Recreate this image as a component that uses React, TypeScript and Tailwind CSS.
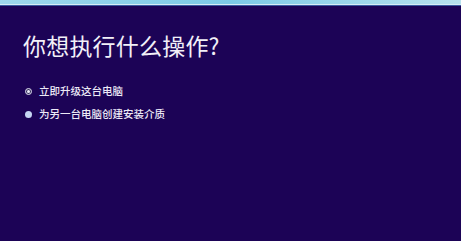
const options = [
  { label: "立即升级这台电脑", selected: true },
  { label: "为另一台电脑创建安装介质", selected: false },
];

export default function App() {
  return (
    <div
      className="w-[461px] h-[241px] flex flex-col bg-[#1c0356] text-white overflow-hidden"
      style={{ fontFamily: '"Noto Sans CJK SC", "Noto Sans", sans-serif' }}
    >
      {/* Window frame edge */}
      <div className="h-[4px] bg-gradient-to-r from-[#9fd8ec] via-[#7ccbe6] to-[#b8e2ee]" />
      <div className="h-[1px] bg-[#d7eef6]" />
      <div className="h-[1px] bg-[#3a5aa0]" />

      <div className="flex flex-col pl-[23px] pt-[24px]">
        <h1 className="text-[23px] leading-[30px] font-normal tracking-[0.2px] text-[#f2f0f8]">
          你想执行什么操作?
        </h1>

        <div className="flex flex-col gap-[11px] mt-[25px] pl-[2px]">
          {options.map((o) => (
            <div key={o.label} className="flex items-center gap-[7px]">
              {o.selected ? (
                <span className="w-[7px] h-[7px] rounded-full border-[1.5px] border-[#dcdcf0] flex items-center justify-center bg-[#3a3460]">
                  <span className="w-[3px] h-[3px] rounded-full bg-[#eeeefa]" />
                </span>
              ) : (
                <span className="w-[7px] h-[7px] rounded-full bg-[#c6d6f4]" />
              )}
              <span className="text-[10.5px] leading-[12px] font-medium text-[#ece9f6]">{o.label}</span>
            </div>
          ))}
        </div>
      </div>
    </div>
  );
}
